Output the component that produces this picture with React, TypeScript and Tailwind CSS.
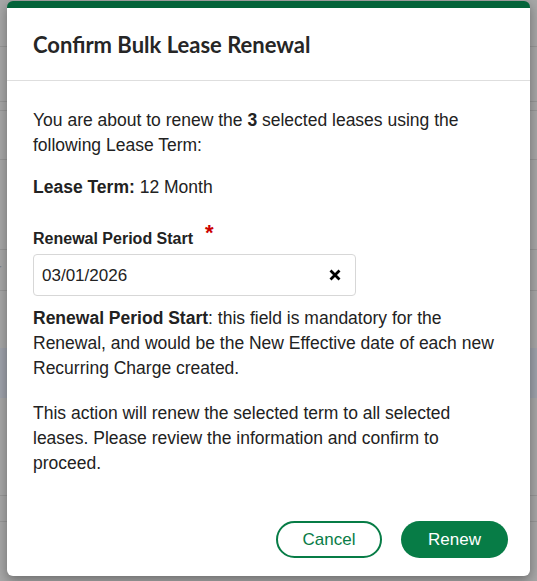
import React from "react";

export default function App() {
  const body = { fontFamily: '"Liberation Sans", Arial, sans-serif' };
  return (
    <div className="relative h-[581px] w-[537px] overflow-hidden bg-[#a7a7a7]" style={body}>
      {/* dimmed background page rows */}
      <div className="flex flex-col">
        <div className="h-[47px] border-b border-[#979797]" />
        <div className="h-[55px] border-b border-[#979797]" />
        <div className="h-[9px] border-b border-[#979797]" />
        <div className="h-[49px] border-b border-[#979797]" />
        <div className="h-[90px] border-b border-[#979797]" />
        <div className="flex h-[41px] items-center border-b border-[#979797] text-[16px] text-[#7d7f86]">
          <span className="-ml-[4px]">r</span>
        </div>
        <div className="h-[57px]" />
        <div className="h-[50px] bg-[#9ea2ab]" />
        <div className="h-[98px] border-b border-[#979797]" />
        <div className="h-[26px] border-b border-[#979797]" />
      </div>

      {/* modal */}
      <div className="absolute left-[7px] top-[1px] flex h-[575px] w-[523px] flex-col overflow-hidden rounded-[6px] border-t-[7px] border-[#04643a] bg-white shadow-[0_4px_12px_rgba(0,0,0,0.35)]">
        <div className="flex h-[73px] shrink-0 items-center border-b border-[#dedede] px-[26px]">
          <h2
            className="text-[22px] font-bold text-[#262626]"
            style={{ fontFamily: 'Lato, "Open Sans", sans-serif' }}
          >
            Confirm Bulk Lease Renewal
          </h2>
        </div>

        <div className="flex flex-1 flex-col px-[26px] pt-[27px] text-[17.5px] leading-[25px] text-[#222222]">
          <div className="w-[462px]">
            <p>
              You are about to renew the <b>3</b> selected leases using the following Lease Term:
            </p>
            <p className="mt-[17px]">
              <b>Lease Term:</b> 12 Month
            </p>
            <div className="mt-[29px] flex items-start text-[16px] font-bold leading-[20px]">
              <span>Renewal Period Start</span>
              <span className="ml-[12px] -mt-[7px] text-[22px] leading-[22px] text-[#cc0000]">*</span>
            </div>
            <div className="mt-[5px] flex h-[42px] w-[323px] items-center justify-between rounded-[4px] border border-[#d7d7d7] pl-[8px] pr-[14px]">
              <span className="text-[17px] text-[#222222]">03/01/2026</span>
              <svg width="12" height="12" viewBox="0 0 12 12">
                <path d="M1.5 1.5 L10.5 10.5 M10.5 1.5 L1.5 10.5" stroke="#000" strokeWidth="2.8" strokeLinecap="butt" />
              </svg>
            </div>
            <p className="mt-[10px]">
              <b>Renewal Period Start</b>: this field is mandatory for the Renewal, and would be the New Effective date of each new Recurring Charge created.
            </p>
            <p className="mt-[20px]">
              This action will renew the selected term to all selected leases. Please review the information and confirm to proceed.
            </p>
          </div>
        </div>

        <div className="flex shrink-0 items-center justify-end gap-[19px] pb-[18px] pr-[22px]">
          <button className="h-[37px] w-[106px] rounded-full border-2 border-[#077c46] bg-white text-[17px] text-[#077c46]">
            Cancel
          </button>
          <button className="h-[37px] w-[107px] rounded-full bg-[#077c46] text-[17px] text-white">
            Renew
          </button>
        </div>
      </div>
    </div>
  );
}
